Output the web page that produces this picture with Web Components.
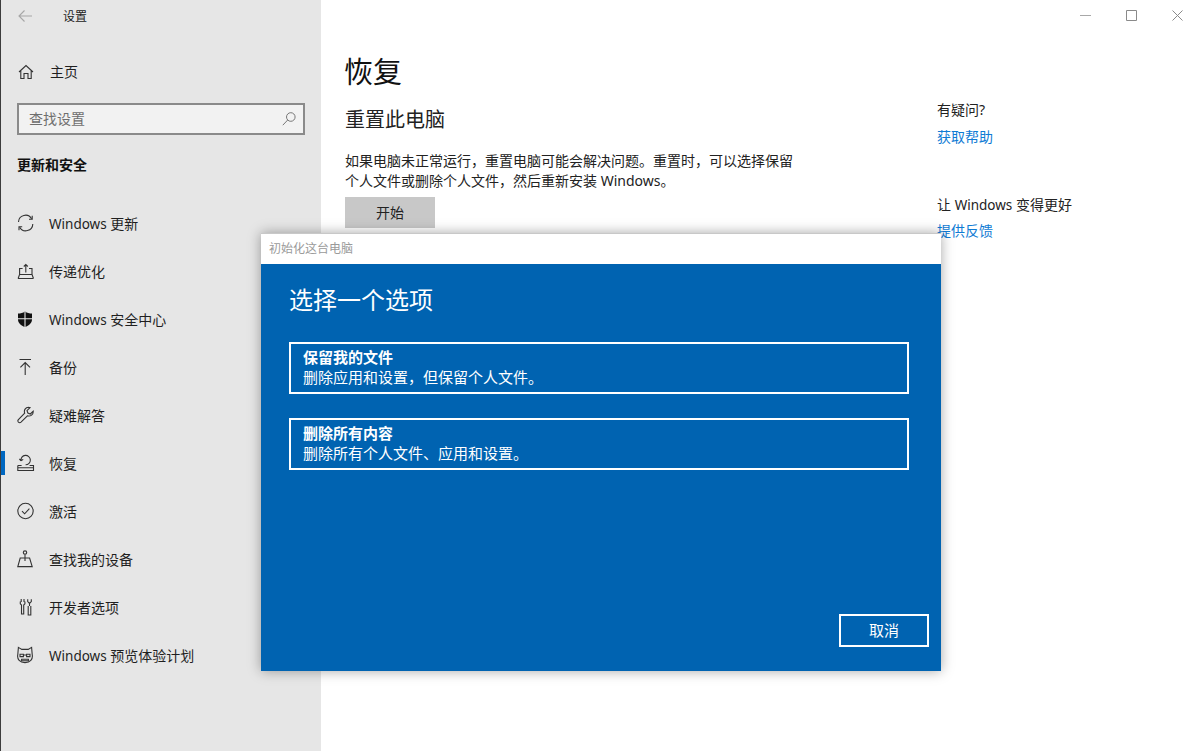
<!DOCTYPE html>
<html lang="zh-CN"><head><meta charset="utf-8"><title>设置</title>
<style>
html,body{margin:0;height:751px;overflow:hidden;background:#fff;font-family:"Noto Sans","Noto Sans CJK SC",sans-serif;color:#1a1a1a}
.l{font-size:13.5px}
</style></head><body>
<settings-app>
  <settings-sidebar slot="side">
    <nav-item icon="update"><span class="l">Windows</span> 更新</nav-item>
    <nav-item icon="delivery">传递优化</nav-item>
    <nav-item icon="shield"><span class="l">Windows</span> 安全中心</nav-item>
    <nav-item icon="backup">备份</nav-item>
    <nav-item icon="wrench">疑难解答</nav-item>
    <nav-item icon="recovery" active>恢复</nav-item>
    <nav-item icon="check">激活</nav-item>
    <nav-item icon="find">查找我的设备</nav-item>
    <nav-item icon="dev">开发者选项</nav-item>
    <nav-item icon="cat"><span class="l">Windows</span> 预览体验计划</nav-item>
  </settings-sidebar>
  <recovery-page slot="main"></recovery-page>
  <reset-dialog slot="over">
    <option-card title="保留我的文件" desc="删除应用和设置，但保留个人文件。"></option-card>
    <option-card title="删除所有内容" desc="删除所有个人文件、应用和设置。"></option-card>
  </reset-dialog>
</settings-app>
<script>
const S='fill="none" stroke="#333" stroke-width="1.1"';
const ICONS={
 update:`<svg width="18" height="18" viewBox="0 0 18 18" ${S}><path d="M1.500 8A7 7 0 0 1 14.600 4.800M15.800 10A7 7 0 0 1 2.700 13.200"/><path d="M15.200 1.800v3.400h-3.200M2 16.200v-3.400h3.200"/></svg>`,
 delivery:`<svg width="18" height="18" viewBox="0 0 18 18" ${S}><path d="M.8 16.500h15.800M1.200 16.300 2.600 12.500V6.500h3M12 6.500h3v6l1.400 3.800M2.600 12.500h12.400"/><path d="M8.800 10.500V2.500M6.800 4.500 8.800 2.500l2 2"/></svg>`,
 shield:`<svg width="18" height="18" viewBox="0 0 18 18"><path fill="#111" d="M8 1.200C6 3 3.500 3.600 1 3.600V9.500C1 13 4 15.600 8 17c4-1.400 7-4 7-7.500V3.600C12.500 3.600 10 3 8 1.200Z"/><path stroke="#e6e6e6" stroke-width="1.100" d="M8 1v16M.8 8.800h14.400"/></svg>`,
 backup:`<svg width="18" height="18" viewBox="0 0 18 18" ${S}><path d="M2.500 1.500h11.500M8.200 17V4.500M3.400 9.400 8.200 4.600l4.800 4.800"/></svg>`,
 wrench:`<svg width="18" height="18" viewBox="0 0 18 18" ${S}><path d="M11.500 1.200a4.300 4.300 0 0 0-3.800 5.900L1.400 13.600a1.900 1.900 0 0 0 0 2.500 1.900 1.900 0 0 0 2.600 0l6.400-6.300a4.400 4.400 0 0 0 5.800-4.600L13.300 8 10.900 7 10 4.600l3-3a4 4 0 0 0-1.500-.4Z"/></svg>`,
 recovery:`<svg width="18" height="18" viewBox="0 0 18 18" ${S}><path d="M.8 11.500V16.500H16.500V11.500H12.600M.8 11.500H4.600M.8 13.700h15.700"/><path d="M4 6.800A4.700 4.700 0 1 1 8.600 10.800M4 6.800 2.400 4.800M4 6.800 6.200 5.400"/></svg>`,
 check:`<svg width="18" height="18" viewBox="0 0 18 18" ${S}><circle cx="8.500" cy="9" r="7.700"/><path d="M5 9.200 7.600 11.800 12.400 6.600"/></svg>`,
 find:`<svg width="18" height="18" viewBox="0 0 18 18" ${S}><circle cx="8" cy="2.600" r="1.700"/><path d="M8 4.400V11M.8 16.600 3.200 8h9.400l2.600 8.600ZM.8 16.600h14.400"/></svg>`,
 dev:`<svg width="18" height="18" viewBox="0 0 18 18" ${S}><path d="M4.200 1v3M7 1v3M3.300 3.600v2.200l1.200 1.200v9h2.200V7l1.200-1.200V3.600M11.200 8v9h2.600V8M12.500 8V5.400M10.700 1.200v2.400l1.800 1.800 1.800-1.800V1.200"/></svg>`,
 cat:`<svg width="18" height="18" viewBox="0 0 18 18" ${S}><path d="M1.400 1.400 4.800 3.400h6.400L14.600 1.400 15.200 8.500C16.200 13.500 13 16.600 8 16.600S-.2 13.500.8 8.500Z"/><path d="M3 8.200h3.400v2.400H3ZM9.600 8.200H13v2.400H9.600ZM4.600 13.200h6.800v1.600H4.600ZM6.400 9h3.200"/></svg>`
};
class Base extends HTMLElement{
  render(html){if(!this.shadowRoot)this.attachShadow({mode:'open'});this.shadowRoot.innerHTML=html}
}
customElements.define('settings-app',class extends Base{connectedCallback(){this.render(`<style>
:host{display:flex;position:relative;width:1202px;height:751px;overflow:hidden}
.win{flex:1;min-width:0;position:relative}
.caption{position:absolute;top:0;right:0;display:flex;align-items:center;height:30px;padding-right:16px;gap:29px}
.over{position:absolute;left:261px;top:233px}
svg{display:block}
</style>
<slot name="side"></slot>
<div class="win"><slot name="main"></slot>
 <div class="caption">
  <svg width="17" height="17" viewBox="0 0 17 17" fill="none" stroke="#a8a8a8" stroke-width="1"><path d="M3 8.500h11"/></svg>
  <svg width="17" height="17" viewBox="0 0 17 17" fill="none" stroke="#8a8a8a" stroke-width="1"><path d="M3.500 3.500h10v10h-10Z"/></svg>
  <svg width="17" height="17" viewBox="0 0 17 17" fill="none" stroke="#8a8a8a" stroke-width="1"><path d="M3.500 3.500l10 10M13.500 3.500l-10 10"/></svg>
 </div>
</div>
<div class="over"><slot name="over"></slot></div>`)}});
customElements.define('settings-sidebar',class extends Base{connectedCallback(){this.render(`<style>
:host{display:flex;flex-direction:column;flex:none;box-sizing:border-box;width:321px;height:751px;background:#e6e6e6;border-left:1px solid #3c3c3c;color:#1f1f1f;font-size:14px}
.top{display:flex;align-items:center;height:32px;padding-left:16px;gap:30px}
.top span{font-size:12px;color:#222}
.home{display:flex;align-items:center;height:48px;margin-top:16px;padding-left:17px;gap:16px}
.home span{line-height:20px}
.search{box-sizing:border-box;margin:7px 0 0 16px;width:288px;height:32px;border:2px solid #8a8a8a;background:#f2f2f2;display:flex;align-items:center;justify-content:space-between;padding:0 6px 3px 10px;color:#6e6e6e}
.search svg{margin-top:3px}
h2{margin:19px 0 0 16px;font-size:14px;font-weight:700;line-height:22px;color:#111}
.list{margin-top:23px;display:flex;flex-direction:column}
svg{display:block}
</style>
<div class="top"><svg width="16" height="16" viewBox="0 0 16 16" fill="none" stroke="#a6a6a6" stroke-width="1.100"><path d="M2 8h13M7.500 2.500 2 8l5.500 5.500"/></svg><span>设置</span></div>
<div class="home"><svg width="16" height="16" viewBox="0 0 16 16" fill="none" stroke="#333" stroke-width="1.100"><path d="M1 8 8 1.500 15 8M2.800 6.800V14.500H6V9.500H10V14.500H13.200V6.800"/></svg><span>主页</span></div>
<div class="search"><span>查找设置</span><svg width="16" height="16" viewBox="0 0 16 16" fill="none" stroke="#777" stroke-width="1"><circle cx="9.800" cy="6" r="4.300"/><path d="M6.700 9 1.800 14.200"/></svg></div>
<h2>更新和安全</h2>
<div class="list"><slot></slot></div>`)}});
customElements.define('nav-item',class extends Base{connectedCallback(){
 const active=this.hasAttribute('active');
 this.render(`<style>
:host{display:flex;align-items:center;height:48px;position:relative;padding-left:16px;gap:14px;white-space:nowrap}
.bar{position:absolute;left:0;top:12px;width:4px;height:24px;background:#0067c0}
.i{width:18px;height:18px;flex:none}
svg{display:block}
</style>${active?'<div class="bar"></div>':''}<div class="i">${ICONS[this.getAttribute('icon')]}</div><span><slot></slot></span>`)}});
customElements.define('recovery-page',class extends Base{connectedCallback(){this.render(`<style>
:host{display:flex;height:751px;box-sizing:border-box;padding:49px 0 0 24px;color:#1a1a1a}
.col{width:592px;flex:none}
h1{margin:0 0 0 -1px;font-size:29px;font-weight:400;line-height:46px;color:#111}
h3{margin:10px 0 0;font-size:20px;font-weight:400;line-height:30px;color:#222}
p{margin:16px 0 0;font-size:14px;line-height:20px;width:460px;color:#222}
button{display:block;margin-top:6px;width:90px;height:31px;border:0;background:#c8c8c8;font:inherit;font-size:14px;color:#222;padding:0 0 1px}
.aside{font-size:14px;margin-top:50px}
.l{font-size:13.5px}
.q{line-height:22px;color:#222}
a{display:block;margin-top:5px;line-height:22px;color:#0f7bd4;text-decoration:none}
.q2{margin-top:46px}
.q2+a{margin-top:4px}
</style>
<div class="col"><h1>恢复</h1><h3>重置此电脑</h3>
<p>如果电脑未正常运行，重置电脑可能会解决问题。重置时，可以选择保留个人文件或删除个人文件，然后重新安装 Windows。</p>
<button>开始</button></div>
<div class="aside"><div class="q">有疑问?</div><a>获取帮助</a><div class="q q2">让 <span class="l">Windows</span> 变得更好</div><a>提供反馈</a></div>`)}});
customElements.define('reset-dialog',class extends Base{connectedCallback(){this.render(`<style>
:host{display:flex;flex-direction:column;width:680px;height:438px;box-shadow:0 0 12px rgba(0,0,0,.35);font-size:13px}
.title{box-sizing:border-box;height:31px;background:#fff;color:#9a9a9a;font-size:12px;padding:0 0 2px 8px;display:flex;align-items:center;border-top:1px solid #c8c8c8}
.body{flex:1;min-height:0;background:#0063b1;color:#fff;box-sizing:border-box;padding:18px 32px 24px 28px;display:flex;flex-direction:column}
h2{margin:0;font-size:24px;font-weight:400;line-height:36px}
.opts{margin-top:24px;display:flex;flex-direction:column;gap:24px}
.foot{margin-top:auto;display:flex;justify-content:flex-end;margin-right:-20px}
.cancel{box-sizing:border-box;width:90px;height:33px;border:2px solid #fff;display:flex;align-items:center;justify-content:center;font-size:15px;padding-bottom:2px}
</style>
<div class="title">初始化这台电脑</div>
<div class="body"><h2>选择一个选项</h2><div class="opts"><slot></slot></div><div class="foot"><div class="cancel">取消</div></div></div>`)}});
customElements.define('option-card',class extends Base{connectedCallback(){this.render(`<style>
:host{display:flex;flex-direction:column;justify-content:center;box-sizing:border-box;width:620px;height:52px;border:2px solid #fff;padding:0 12px 2px;color:#fff;font-size:15px;line-height:20px}
b{font-weight:700}
</style><b>${this.getAttribute('title')}</b><span>${this.getAttribute('desc')}</span>`)}});
</script>
</body></html>
